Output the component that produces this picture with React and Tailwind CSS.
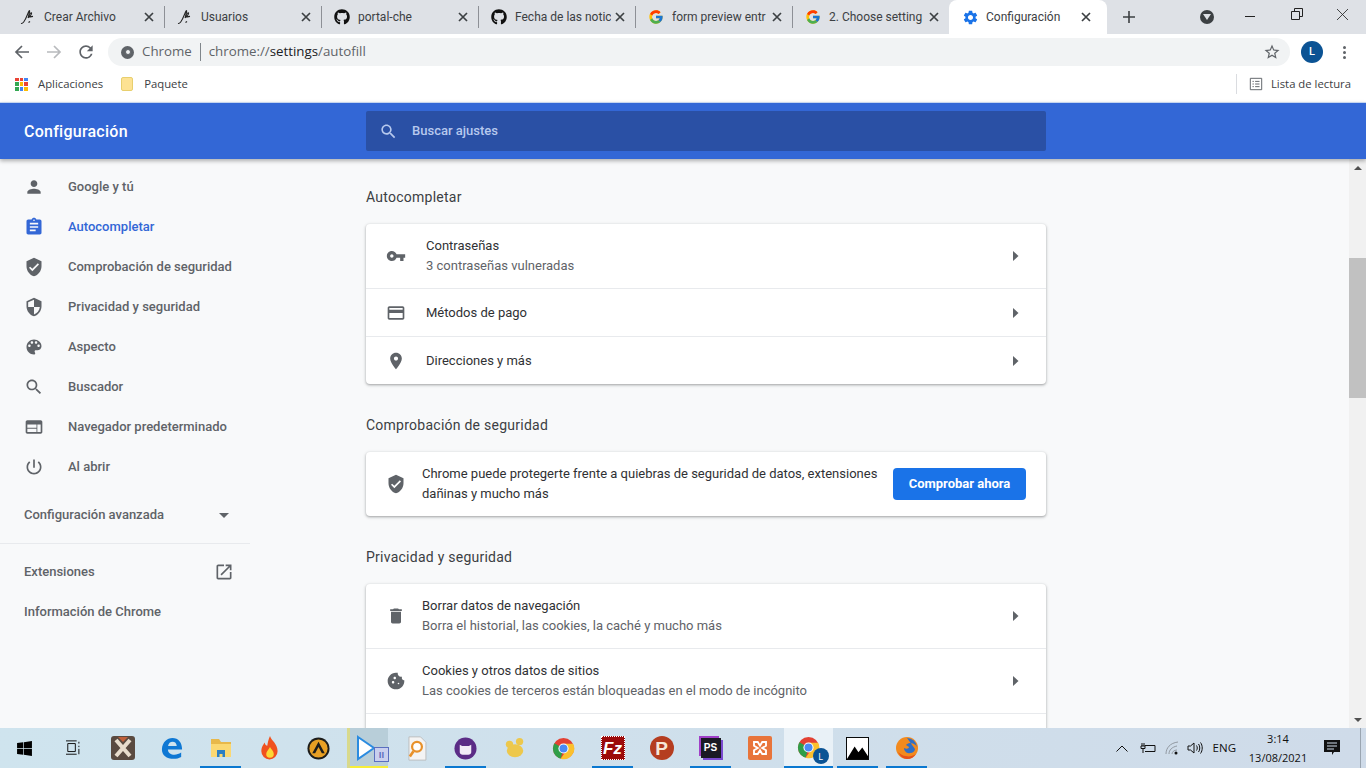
import { FaGithub, FaWindows } from "react-icons/fa";
import { FcGoogle } from "react-icons/fc";

const paths = {
  person: "M12 12c2.21 0 4-1.79 4-4s-1.79-4-4-4-4 1.79-4 4 1.79 4 4 4zm0 2c-2.67 0-8 1.34-8 4v2h16v-2c0-2.66-5.33-4-8-4z",
  assignment: "M19 3h-4.18C14.4 1.84 13.3 1 12 1c-1.3 0-2.4.84-2.82 2H5c-1.1 0-2 .9-2 2v14c0 1.1.9 2 2 2h14c1.1 0 2-.9 2-2V5c0-1.1-.9-2-2-2zm-7 0c.55 0 1 .45 1 1s-.45 1-1 1-1-.45-1-1 .45-1 1-1zm2 14H7v-2h7v2zm3-4H7v-2h10v2zm0-4H7V7h10v2z",
  verified: "M12 1L3 5v6c0 5.55 3.84 10.74 9 12 5.16-1.26 9-6.45 9-12V5l-9-4zm-2 16l-4-4 1.41-1.41L10 14.17l6.59-6.59L18 9l-8 8z",
  security: "M12 1L3 5v6c0 5.55 3.84 10.74 9 12 5.16-1.26 9-6.45 9-12V5l-9-4zm0 10.99h7c-.53 4.12-3.28 7.79-7 8.94V12H5V6.3l7-3.11v8.8z",
  palette: "M12 3c-4.97 0-9 4.03-9 9s4.03 9 9 9c.83 0 1.5-.67 1.5-1.5 0-.39-.15-.74-.39-1.01-.23-.26-.38-.61-.38-.99 0-.83.67-1.5 1.5-1.5H16c2.76 0 5-2.24 5-5 0-4.42-4.03-8-9-8zm-5.5 9c-.83 0-1.5-.67-1.5-1.5S5.67 9 6.5 9 8 9.67 8 10.5 7.33 12 6.5 12zm3-4C8.67 8 8 7.33 8 6.5S8.67 5 9.5 5s1.5.67 1.5 1.5S10.33 8 9.5 8zm5 0c-.83 0-1.5-.67-1.5-1.5S13.67 5 14.5 5s1.5.67 1.5 1.5S15.33 8 14.5 8zm3 4c-.83 0-1.5-.67-1.5-1.5S16.67 9 17.5 9s1.5.67 1.5 1.5-.67 1.5-1.5 1.5z",
  search: "M15.5 14h-.79l-.28-.27C15.41 12.59 16 11.11 16 9.5 16 5.91 13.09 3 9.5 3S3 5.91 3 9.5 5.91 16 9.5 16c1.61 0 3.09-.59 4.23-1.57l.27.28v.79l5 4.99L20.49 19l-4.99-5zm-6 0C7.01 14 5 11.99 5 9.5S7.01 5 9.5 5 14 7.01 14 9.5 11.99 14 9.5 14z",
  web: "M20 4H4c-1.1 0-1.99.9-1.99 2L2 18c0 1.1.9 2 2 2h16c1.1 0 2-.9 2-2V6c0-1.1-.9-2-2-2zm-5 14H4v-4h11v4zm0-5H4V9h11v4zm5 5h-4V9h4v9z",
  power: "M13 3h-2v10h2V3zm4.83 2.17l-1.42 1.42C17.99 7.86 19 9.81 19 12c0 3.87-3.13 7-7 7s-7-3.13-7-7c0-2.19 1.01-4.14 2.58-5.42L6.17 5.17C4.23 6.82 3 9.26 3 12c0 4.97 4.03 9 9 9s9-4.03 9-9c0-2.74-1.23-5.18-3.17-6.83z",
  key: "M12.65 10C11.83 7.67 9.61 6 7 6c-3.31 0-6 2.69-6 6s2.69 6 6 6c2.61 0 4.83-1.67 5.65-4H17v4h4v-4h2v-4H12.65zM7 14c-1.1 0-2-.9-2-2s.9-2 2-2 2 .9 2 2-.9 2-2 2z",
  card: "M20 4H4c-1.11 0-1.99.89-1.99 2L2 18c0 1.11.89 2 2 2h16c1.11 0 2-.89 2-2V6c0-1.11-.89-2-2-2zm0 14H4v-6h16v6zm0-10H4V6h16v2z",
  place: "M12 2C8.13 2 5 5.13 5 9c0 5.25 7 13 7 13s7-7.75 7-13c0-3.87-3.13-7-7-7zm0 9.5c-1.38 0-2.5-1.12-2.5-2.5s1.12-2.5 2.5-2.5 2.5 1.12 2.5 2.5-1.12 2.5-2.5 2.5z",
  trash: "M6 19c0 1.1.9 2 2 2h8c1.1 0 2-.9 2-2V7H6v12zM19 4h-3.5l-1-1h-5l-1 1H5v2h14V4z",
  cookie: "M21.95 10.99c-1.79-.03-3.7-1.95-2.68-4.22-2.98 1-5.77-1.59-5.19-4.56C6.95.71 2 6.58 2 12c0 5.52 4.48 10 10 10 5.89 0 10.54-5.08 9.95-11.01zM8.5 15c-.83 0-1.5-.67-1.5-1.5S7.67 12 8.5 12s1.5.67 1.5 1.5S9.33 15 8.5 15zm2-5C9.67 10 9 9.33 9 8.5S9.67 7 10.5 7s1.5.67 1.5 1.5-.67 1.5-1.5 1.5zm4.5 6c-.55 0-1-.45-1-1s.45-1 1-1 1 .45 1 1-.45 1-1 1z",
  open: "M19 19H5V5h7V3H5c-1.11 0-2 .9-2 2v14c0 1.1.89 2 2 2h14c1.1 0 2-.9 2-2v-7h-2v7zM14 3v2h3.59l-9.83 9.83 1.41 1.41L19 6.41V10h2V3h-7z",
  gear: "M19.14 12.94c.04-.3.06-.61.06-.94 0-.32-.02-.64-.07-.94l2.03-1.58c.18-.14.23-.41.12-.61l-1.92-3.32c-.12-.22-.37-.29-.59-.22l-2.39.96c-.5-.38-1.03-.7-1.62-.94l-.36-2.54c-.04-.24-.24-.41-.48-.41h-3.84c-.24 0-.43.17-.47.41l-.36 2.54c-.59.24-1.13.57-1.62.94l-2.39-.96c-.22-.08-.47 0-.59.22L2.74 8.87c-.12.21-.08.47.12.61l2.03 1.58c-.05.3-.09.63-.09.94s.02.64.07.94l-2.03 1.58c-.18.14-.23.41-.12.61l1.92 3.32c.12.22.37.29.59.22l2.39-.96c.5.38 1.03.7 1.62.94l.36 2.54c.05.24.24.41.48.41h3.84c.24 0 .44-.17.47-.41l.36-2.54c.59-.24 1.13-.56 1.62-.94l2.39.96c.22.08.47 0 .59-.22l1.92-3.32c.12-.22.07-.47-.12-.61l-2.01-1.58zM12 15.6c-1.98 0-3.6-1.62-3.6-3.6s1.62-3.6 3.6-3.6 3.6 1.62 3.6 3.6-1.62 3.6-3.6 3.6z",
};

const Icon = ({ name, className }) => (
  <svg viewBox="0 0 24 24" fill="currentColor" className={className}>
    <path d={paths[name]} />
  </svg>
);

const PenIcon = () => (
  <svg viewBox="0 0 16 16" className="h-4 w-4 shrink-0" fill="none" stroke="#222" strokeWidth="1.100">
    <path d="M1 14.500c1.200.3 2-.6 2.700-1.500 1.500-2 2.800-5 4-8 .5-1.300 1.200-3.500 1.700-3.500.6 0-.3 4-1.300 7.500" />
    <path d="M8.500 8.500c.6-1.800 1.800-4.800 2.800-4.800.8 0-.4 3-1.800 4.300 1.300-.3 2.600-.4 3.500-.6" />
    <path d="M8.500 13.500l1.500-1" />
  </svg>
);

const CloseX = () => (
  <svg viewBox="0 0 10 10" className="ml-1 h-[10px] w-[10px] shrink-0" stroke="#3c4043" strokeWidth="1.700">
    <path d="M1 1l8 8M9 1l-8 8" />
  </svg>
);

const Tab = ({ icon, title, last }) => (
  <div className={`flex h-[22px] shrink-0 items-center pl-3 pr-[10px] ${last ? "w-[156px]" : "w-[157px] border-r border-[#8d9096]"}`}>
    <span className="flex w-[24px] shrink-0 items-center">{icon}</span>
    <span className="min-w-0 flex-1 overflow-hidden whitespace-nowrap text-[12px] text-[#3c4043]">{title}</span>
    <CloseX />
  </div>
);

const ChromeLogo = ({ className }) => (
  <svg viewBox="0 0 24 24" className={className}>
    <circle cx="12" cy="12" r="11" fill="#e34133" />
    <path d="M12 12L2.500 6.500A11 11 0 0 0 9 22.600z" fill="#2f9e48" />
    <path d="M12 7h10a11 11 0 0 1-13 15.600L15 14z" fill="#fbc02d" />
    <circle cx="12" cy="12" r="5.300" fill="#fff" />
    <circle cx="12" cy="12" r="4.200" fill="#4a8af4" />
  </svg>
);

const navItems = [
  ["person", "Google y tú"],
  ["assignment", "Autocompletar", true],
  ["verified", "Comprobación de seguridad"],
  ["security", "Privacidad y seguridad"],
  ["palette", "Aspecto"],
  ["search", "Buscador"],
  ["web", "Navegador predeterminado"],
  ["power", "Al abrir"],
];

const Caret = () => (
  <svg viewBox="0 0 6 10" className="h-[10px] w-[6px] shrink-0" fill="#5f6368">
    <path d="M0 0l5.500 5L0 10z" />
  </svg>
);

const Row = ({ icon, title, sub, tight, border, height }) => (
  <div className={`flex items-center pl-[20px] pr-[27px] ${height} ${border ? "border-t border-[#e8eaed]" : ""}`}>
    <Icon name={icon} className={`h-5 w-5 shrink-0 text-[#5f6368] ${tight ? "mr-[16px]" : "mr-[20px]"}`} />
    <div className="flex-1">
      <div className="text-[13px] leading-[20px] text-[#303134]">{title}</div>
      {sub && <div className="text-[13px] leading-[20px] text-[#5f6368]">{sub}</div>}
    </div>
    <Caret />
  </div>
);

const SectionTitle = ({ children, className }) => (
  <h2 className={`text-[14px] font-normal leading-[20px] tracking-[0.25px] text-[#3c4043] ${className}`}>{children}</h2>
);

const slots = [
  { icon: <FaWindows className="h-[17px] w-[17px] text-black" /> },
  {
    icon: (
      <svg viewBox="0 0 18 18" className="h-[16px] w-[16px]" fill="none" stroke="#111" strokeWidth="1.100">
        <path d="M0 1h12M0 16h12M2 4h8.500v9H2zM14.500 2v2M14.500 6.500v1.500M14.500 10v6" />
      </svg>
    ),
  },
  {
    icon: (
      <svg viewBox="0 0 24 24" className="h-6 w-6">
        <rect x="0" y="0" width="24" height="24" rx="3" fill="#5a4a40" />
        <path d="M5 4l14 16M19 4L5 20" stroke="#e8dccc" strokeWidth="4" />
        <path d="M7 1l5 5 5-5" fill="#c0603a" />
      </svg>
    ),
  },
  {
    icon: (
      <svg viewBox="0 0 24 24" className="h-[22px] w-[22px]">
        <path
          d="M1 13C1.500 5.500 6.500 1 12.500 1 19 1 23 6 23 13.500H7.500c.3 4 3.500 5.800 7 5.800 2.800 0 5-.8 7.500-2.300v4.800c-2.500 1.400-5.200 2-8 2C6 23.800 .8 20 1 13zM7.700 9.800h9.500c-.2-2.800-2-4.500-4.600-4.500-2.500 0-4.400 1.700-4.900 4.500z"
          fill="#0f78d4"
        />
      </svg>
    ),
  },
  {
    icon: (
      <svg viewBox="0 0 24 24" className="h-6 w-6">
        <path d="M2 3h8l2 3h10v14H2z" fill="#e8b84a" />
        <path d="M2 8h20v13H2z" fill="#fbd872" />
        <path d="M8 14h8v7h-2.500v-3h-3v3H8z" fill="#2c7fc4" />
      </svg>
    ),
    underline: "bg-[#0a78d0]",
  },
  {
    icon: (
      <svg viewBox="0 0 24 24" className="h-[26px] w-[26px]">
        <path d="M12 1c1 4 7 7 7 14a7.500 7.500 0 0 1-15 0c0-4 2-6 3-8 .5 2 1.500 3 2.500 3C10 7 10.500 4 12 1z" fill="#f0511e" />
        <path d="M12 11c1 2 3.500 4 3.500 6.500a3.500 3.500 0 0 1-7 0c0-2.500 2.500-4 3.500-6.500z" fill="#fdd835" />
      </svg>
    ),
  },
  {
    icon: (
      <svg viewBox="0 0 24 24" className="h-[23px] w-[23px]">
        <circle cx="12" cy="12" r="11.500" fill="#1d1d1b" />
        <circle cx="12" cy="12" r="9.500" fill="#e8a024" />
        <path d="M12 5l6.500 12h-3L12 10.500 8.500 17h-3z" fill="#1d1d1b" />
      </svg>
    ),
  },
  {
    icon: (
      <span className="relative flex h-7 w-7">
        <svg viewBox="0 0 24 28" className="h-7 w-6">
          <path d="M3 3l16 11L3 25z" fill="#fff" stroke="#2b8be0" strokeWidth="2" />
        </svg>
        <span className="absolute right-[-6px] bottom-0 flex h-[15px] w-[15px] items-center justify-center border border-[#5a6fc0] bg-[#c9cfee] text-[8px] font-bold leading-none text-[#5568bd]">
          II
        </span>
      </span>
    ),
    bg: "bg-[#b8ced9] border-l-[3px] border-[#d8d98c]",
    underline: "bg-[#f7ee3a]",
  },
  {
    icon: (
      <svg viewBox="0 0 24 28" className="h-[25px] w-[22px]">
        <path d="M3 1h13l6 6v20H3z" fill="#f4f4f4" stroke="#bbb" />
        <circle cx="12" cy="12" r="5.500" fill="#fff" stroke="#e8912a" strokeWidth="2.500" />
        <path d="M8 17l-4 6" stroke="#e8912a" strokeWidth="3" />
      </svg>
    ),
  },
  {
    icon: (
      <svg viewBox="0 0 24 24" className="h-[23px] w-[23px]">
        <circle cx="12" cy="12" r="11.500" fill="#5b2c86" />
        <path d="M6 8l2.500 1.500h7L18 8v8c0 1.500-1.500 2.500-3 2.500H9c-1.500 0-3-1-3-2.500z" fill="#f2ecf7" />
      </svg>
    ),
    underline: "bg-[#0a78d0]",
  },
  {
    icon: (
      <svg viewBox="0 0 24 24" className="h-[22px] w-[22px]" fill="#edc84c">
        <circle cx="6" cy="8" r="4" />
        <circle cx="17" cy="5" r="4" />
        <ellipse cx="12" cy="15" rx="9" ry="7" />
      </svg>
    ),
  },
  { icon: <ChromeLogo className="h-[23px] w-[23px]" /> },
  {
    icon: (
      <span className="flex h-6 w-6 items-center justify-center border border-dotted border-white bg-[#9c0a0a] font-['Liberation_Sans',sans-serif] text-[17px] font-bold italic leading-none text-white">
        Fz
      </span>
    ),
    underline: "bg-[#0a78d0]",
  },
  {
    icon: (
      <span className="flex h-6 w-6 items-center justify-center rounded-full bg-[#b53d20] font-['Liberation_Sans',sans-serif] text-[19px] font-bold leading-none text-[#f6e7d8]">
        P
      </span>
    ),
  },
  {
    icon: (
      <span className="flex h-[20px] w-[20px] items-center justify-center bg-[#1a1a24] font-['Liberation_Sans',sans-serif] text-[10px] font-bold leading-none text-white shadow-[-2px_-2px_0_#a040c8,2px_2px_0_#7a4ad0]">
        PS
      </span>
    ),
    underline: "bg-[#0a78d0]",
  },
  {
    icon: (
      <span className="flex h-6 w-6 items-center justify-center rounded-[2px] bg-[#e8743a] text-white">
        <svg viewBox="0 0 24 24" className="h-[18px] w-[18px]" fill="none" stroke="#fff" strokeWidth="2.500">
          <path d="M4 4h5l3 5 3-5h5v5l-5 3 5 3v5h-5l-3-5-3 5H4v-5l5-3-5-3z" />
        </svg>
      </span>
    ),
  },
  {
    icon: (
      <span className="relative flex h-[24px] w-[24px]">
        <ChromeLogo className="h-[23px] w-[23px]" />
        <span className="absolute right-[-8px] bottom-[-4px] flex h-4 w-4 items-center justify-center rounded-full bg-[#0b5394] text-[9px] leading-none text-white">
          L
        </span>
      </span>
    ),
    bg: "bg-[#e9f1f7]",
    wide: true,
    underline: "bg-[#0a78d0]",
  },
  {
    icon: (
      <svg viewBox="0 0 24 24" className="h-[23px] w-[23px]">
        <rect x=".5" y=".5" width="23" height="23" fill="#fff" stroke="#000" />
        <path d="M1 23l8-13 4 6 4-5 6 9v3H1z" fill="#000" />
      </svg>
    ),
    underline: "bg-[#0a78d0]",
  },
  {
    icon: (
      <svg viewBox="0 0 24 24" className="h-[24px] w-[24px]">
        <circle cx="12" cy="12" r="11" fill="#f28a1e" />
        <path d="M12 2a10 10 0 0 1 10 9c-2-3-4-4-7-4-2 0-3 1-4 2l3 2c0 2-3 2-5 1 0 3 3 6 6 5 3 0 5-2 5-4" fill="#2f6fc6" />
        <path d="M3 16c2 4 5 7 9 7s7-2 9-5c-3 2-7 3-10 2-3 0-6-2-8-4z" fill="#e6501c" />
      </svg>
    ),
    underline: "bg-[#0a78d0]",
  },
];

const App = () => {
  return (
    <div className="flex h-[768px] w-[1366px] flex-col overflow-hidden bg-white font-['Roboto',sans-serif]">
      {/* tab strip */}
      <div className="flex h-[34px] shrink-0 items-center bg-[#dee1e6] pl-[8px]">
        <Tab icon={<PenIcon />} title="Crear Archivo" />
        <Tab icon={<PenIcon />} title="Usuarios" />
        <Tab icon={<FaGithub className="h-4 w-4 text-[#111]" />} title="portal-che" />
        <Tab icon={<FaGithub className="h-4 w-4 text-[#111]" />} title="Fecha de las notic" />
        <Tab icon={<FcGoogle className="h-4 w-4" />} title="form preview entr" />
        <Tab icon={<FcGoogle className="h-4 w-4" />} title="2. Choose setting" last />
        <div className="flex h-[34px] w-[158px] shrink-0 items-center self-end rounded-t-[8px] bg-white pl-[13px] pr-[16px]">
          <span className="flex w-[24px] shrink-0 items-center">
            <Icon name="gear" className="h-[17px] w-[17px] text-[#1a73e8]" />
          </span>
          <span className="flex-1 whitespace-nowrap text-[12px] text-[#3c4043]">Configuración</span>
          <CloseX />
        </div>
        <svg viewBox="0 0 12 12" className="ml-[16px] h-[12px] w-[12px]" stroke="#3c4043" strokeWidth="1.600">
          <path d="M6 0v12M0 6h12" />
        </svg>
        <span className="ml-[65px] flex h-[14px] w-[14px] items-center justify-center rounded-full bg-[#3c4043]">
          <svg viewBox="0 0 8 6" className="h-[6px] w-[8px]" fill="#dee1e6">
            <path d="M0 0h8L4 6z" />
          </svg>
        </span>
        <svg viewBox="0 0 10 2" className="ml-[31px] h-[2px] w-[10px]" fill="#222">
          <path d="M0 0h10v1H0z" />
        </svg>
        <svg viewBox="0 0 12 12" className="ml-[36px] mb-[6px] h-[12px] w-[12px]" fill="none" stroke="#222" strokeWidth="1">
          <path d="M.5 3.500h8v8h-8zM3.500 3.500v-3h8v8h-3" />
        </svg>
        <svg viewBox="0 0 12 12" className="ml-[34px] mb-[6px] h-[11px] w-[11px]" stroke="#222" strokeWidth="0.900">
          <path d="M0 0l12 12M12 0L0 12" />
        </svg>
      </div>

      {/* address bar */}
      <div className="flex h-[35px] shrink-0 items-center bg-white pl-[14px] pt-[1px]">
        <svg viewBox="0 0 16 16" className="h-4 w-4 text-[#5f6368]" fill="none" stroke="currentColor" strokeWidth="1.700">
          <path d="M15 8H2M8 2L2 8l6 6" />
        </svg>
        <svg viewBox="0 0 16 16" className="ml-[16px] h-4 w-4 text-[#b8babd]" fill="none" stroke="currentColor" strokeWidth="1.700">
          <path d="M1 8h13M8 2l6 6-6 6" />
        </svg>
        <svg viewBox="0 0 24 24" className="ml-[14px] h-5 w-5 text-[#5f6368]" fill="currentColor">
          <path d="M17.650 6.350A7.958 7.958 0 0 0 12 4c-4.420 0-7.990 3.580-7.990 8s3.570 8 7.990 8c3.730 0 6.840-2.550 7.730-6h-2.080A5.990 5.990 0 0 1 12 18c-3.310 0-6-2.690-6-6s2.690-6 6-6c1.660 0 3.140.69 4.220 1.780L13 11h7V4l-2.350 2.350z" />
        </svg>
        <div className="ml-[12px] flex h-[28px] w-[1182px] shrink-0 items-center rounded-full bg-[#f1f3f4] pl-[13px] pr-[9px] font-['Open_Sans',sans-serif] text-[13.300px]">
          <span className="flex h-[13px] w-[13px] items-center justify-center rounded-full bg-[#5f6368]">
            <span className="h-[6px] w-[6px] rounded-full border border-[#5f6368] bg-[#f1f3f4]" />
          </span>
          <span className="ml-[8px] text-[#5f6368]">Chrome</span>
          <span className="mx-[8px] h-[18px] w-px bg-[#80868b]" />
          <span className="text-[#5f6368]">
            chrome://<span className="text-[#202124]">settings</span>/autofill
          </span>
          <svg viewBox="0 0 24 24" className="ml-auto h-[18px] w-[18px] text-[#5f6368]" fill="currentColor">
            <path d="M22 9.240l-7.190-.620L12 2 9.190 8.630 2 9.240l5.460 4.730L5.820 21 12 17.270 18.180 21l-1.630-7.030L22 9.240zM12 15.400l-3.760 2.270 1-4.280-3.320-2.880 4.380-.380L12 6.100l1.710 4.040 4.380.380-3.320 2.880 1 4.280L12 15.400z" />
          </svg>
        </div>
        <span className="ml-[11px] flex h-[22px] w-[22px] shrink-0 items-center justify-center rounded-full bg-[#0b5394] text-[11px] font-medium text-white">
          L
        </span>
        <span className="ml-[20px] flex flex-col gap-[2px]">
          <span className="h-[3px] w-[3px] rounded-full bg-[#5f6368]" />
          <span className="h-[3px] w-[3px] rounded-full bg-[#5f6368]" />
          <span className="h-[3px] w-[3px] rounded-full bg-[#5f6368]" />
        </span>
      </div>

      {/* bookmarks */}
      <div className="flex h-[33px] shrink-0 items-center bg-white px-[15px] pb-[3px] font-['Open_Sans',sans-serif] text-[11.300px] text-[#3c4043]">
        <span className="grid h-[13px] w-[13px] grid-cols-3 gap-px">
          {["#ea4335", "#ea4335", "#4285f4", "#34a853", "#fbbc05", "#ea4335", "#34a853", "#4285f4", "#fbbc05"].map((color, i) => (
            <span key={i} style={{ backgroundColor: color }} />
          ))}
        </span>
        <span className="ml-[10px]">Aplicaciones</span>
        <span className="ml-[18px] h-[14px] w-[12px] rounded-[2px] border border-[#e8cf6e] bg-[#fde293]" />
        <span className="ml-[11px]">Paquete</span>
        <span className="ml-auto h-[20px] w-px bg-[#dadce0]" />
        <svg viewBox="0 0 16 16" className="ml-[12px] h-[14px] w-[14px]" fill="none" stroke="#5f6368" strokeWidth="1.100">
          <path d="M1.500 1.500h13v13h-13zM4 5h1.500M7 5h5M4 8h1.500M7 8h5M4 11h1.500M7 11h5" />
        </svg>
        <span className="ml-[8px]">Lista de lectura</span>
      </div>

      {/* settings header */}
      <div className="relative z-10 flex h-[57px] shrink-0 items-center border-t border-[#c5d5ef] bg-[#3367d6] pl-[24px] shadow-[0_2px_4px_rgba(0,0,0,0.3)]">
        <span className="w-[342px] pt-[1px] text-[16px] font-medium tracking-[0.25px] text-white">Configuración</span>
        <div className="flex h-[40px] w-[680px] items-center rounded-[2px] bg-[#2a50a5] pl-[13px]">
          <Icon name="search" className="h-[19px] w-[19px] text-[#b7c9ee]" />
          <span className="ml-[14px] text-[13px] font-medium text-[#b7c9ee]">Buscar ajustes</span>
        </div>
      </div>

      {/* page */}
      <div className="flex min-h-0 flex-1 bg-[#f8f9fa]">
        <aside className="w-[366px] shrink-0 pt-[8px]">
          <div className="w-[250px]">
            {navItems.map(([icon, label, active]) => (
              <div key={label} className="flex h-[40px] items-center pl-[24px]">
                <Icon name={icon} className={`h-5 w-5 shrink-0 ${active ? "text-[#3367d6]" : "text-[#5f6368]"}`} />
                <span className={`ml-[24px] text-[13px] font-medium ${active ? "text-[#3367d6]" : "text-[#5f6368]"}`}>{label}</span>
              </div>
            ))}
            <div className="flex h-[57px] items-center justify-between border-b border-[#e8eaed] pl-[24px] pr-[21px]">
              <span className="text-[13px] font-medium text-[#5f6368]">Configuración avanzada</span>
              <svg viewBox="0 0 10 5" className="h-[5px] w-[10px]" fill="#5f6368">
                <path d="M0 0h10L5 5z" />
              </svg>
            </div>
            <div className="flex h-[55px] items-center justify-between pl-[24px] pr-[16px]">
              <span className="text-[13px] font-medium text-[#5f6368]">Extensiones</span>
              <Icon name="open" className="h-5 w-5 text-[#5f6368]" />
            </div>
            <div className="flex h-[25px] items-center pl-[24px]">
              <span className="text-[13px] font-medium text-[#5f6368]">Información de Chrome</span>
            </div>
          </div>
        </aside>

        <main className="w-[680px] shrink-0 pt-[28px]">
          <SectionTitle>Autocompletar</SectionTitle>
          <div className="mt-[17px] rounded-[4px] bg-white shadow-[0_1px_2px_rgba(60,64,67,0.3),0_1px_3px_1px_rgba(60,64,67,0.15)]">
            <Row icon="key" title="Contraseñas" sub="3 contraseñas vulneradas" height="h-[64px]" />
            <Row icon="card" title="Métodos de pago" border height="h-[48px]" />
            <Row icon="place" title="Direcciones y más" border height="h-[48px]" />
          </div>

          <SectionTitle className="mt-[31px]">Comprobación de seguridad</SectionTitle>
          <div className="mt-[17px] flex h-[64px] items-center rounded-[4px] bg-white pl-[20px] pr-[20px] shadow-[0_1px_2px_rgba(60,64,67,0.3),0_1px_3px_1px_rgba(60,64,67,0.15)]">
            <Icon name="verified" className="mr-[16px] h-5 w-5 shrink-0 text-[#5f6368]" />
            <p className="w-[471px] text-[13px] leading-[20px] text-[#303134]">
              Chrome puede protegerte frente a quiebras de seguridad de datos, extensiones dañinas y mucho más
            </p>
            <button className="ml-auto h-[32px] w-[133px] rounded-[4px] bg-[#1a73e8] text-[13px] font-bold text-white">
              Comprobar ahora
            </button>
          </div>

          <SectionTitle className="mt-[31px]">Privacidad y seguridad</SectionTitle>
          <div className="mt-[17px] h-[200px] rounded-[4px] bg-white shadow-[0_1px_2px_rgba(60,64,67,0.3),0_1px_3px_1px_rgba(60,64,67,0.15)]">
            <Row icon="trash" title="Borrar datos de navegación" sub="Borra el historial, las cookies, la caché y mucho más" tight height="h-[64px]" />
            <Row icon="cookie" title="Cookies y otros datos de sitios" sub="Las cookies de terceros están bloqueadas en el modo de incógnito" tight border height="h-[65px]" />
            <div className="border-t border-[#e8eaed]" />
          </div>
        </main>

        <div className="flex-1" />

        {/* scrollbar */}
        <div className="flex w-[17px] shrink-0 flex-col bg-[#f1f1f1]">
          <div className="flex h-[17px] items-center justify-center">
            <svg viewBox="0 0 8 4" className="h-[4px] w-[8px]" fill="#505050">
              <path d="M4 0l4 4H0z" />
            </svg>
          </div>
          <div className="mt-[82px] h-[140px] bg-[#c1c1c1]" />
          <div className="mt-auto flex h-[17px] items-center justify-center">
            <svg viewBox="0 0 8 4" className="h-[4px] w-[8px]" fill="#505050">
              <path d="M0 0h8L4 4z" />
            </svg>
          </div>
        </div>
      </div>

      {/* taskbar */}
      <div className="flex h-[40px] shrink-0 items-stretch bg-gradient-to-r from-[#cfe4ee] to-[#cfdbe9] font-['Open_Sans',sans-serif]">
        {slots.map((slot, i) => (
          <div key={i} className="flex w-[49px] shrink-0 justify-center">
            <div className={`relative flex h-full items-center justify-center ${slot.wide ? "w-[49px]" : "w-[41px]"} ${slot.bg ?? ""}`}>
              {slot.icon}
              {slot.underline && <span className={`absolute inset-x-0 bottom-0 h-[2px] ${slot.underline}`} />}
            </div>
          </div>
        ))}
        <div className="ml-auto flex items-center pr-[5px] text-[#111]">
          <svg viewBox="0 0 12 7" className="h-[7px] w-[12px]" fill="none" stroke="#111" strokeWidth="1">
            <path d="M.5 6.500L6 1l5.500 5.500" />
          </svg>
          <svg viewBox="0 0 16 12" className="ml-[12px] h-[12px] w-[16px]" fill="none" stroke="#111" strokeWidth="1">
            <path d="M5 3.500h10v6H5M2 1v3M4 1v3M1 4h4v2.500H1zM3 6.500V11" />
          </svg>
          <svg viewBox="0 0 14 14" className="ml-[9px] h-[14px] w-[14px]" fill="none" stroke="#8a9199" strokeWidth="0.900">
            <path d="M1 13C1 7 5 2 13 1M4 13c0-4 3-7 8-8M7 13c0-2 2-4 5-4" />
            <circle cx="11" cy="12" r="1.500" fill="#111" stroke="none" />
          </svg>
          <svg viewBox="0 0 16 14" className="ml-[8px] h-[14px] w-[16px]" fill="none" stroke="#111" strokeWidth="1">
            <path d="M1 5h2.500L7 2v10L3.500 9H1zM9.500 4.500c1 1.500 1 3.500 0 5M11.500 3c1.700 2 1.700 6 0 8M13.500 1.500c2.300 3 2.300 8 0 11" />
          </svg>
          <span className="ml-[10px] text-[11.500px]">ENG</span>
          <div className="ml-[12px] flex w-[60px] flex-col items-center text-[11px] leading-[19px]">
            <span>3:14</span>
            <span>13/08/2021</span>
          </div>
          <svg viewBox="0 0 16 16" className="ml-[16px] h-[16px] w-[16px]" fill="#111">
            <path d="M0 0h16v12h-6l-2 3v-3H0z" />
            <path d="M3 3h10M3 6h10M3 9h7" stroke="#cfdbe9" strokeWidth="1" />
          </svg>
          <span className="ml-[20px] h-[40px] w-px bg-[#9aa5b1]" />
        </div>
      </div>
    </div>
  );
};

export default App;
